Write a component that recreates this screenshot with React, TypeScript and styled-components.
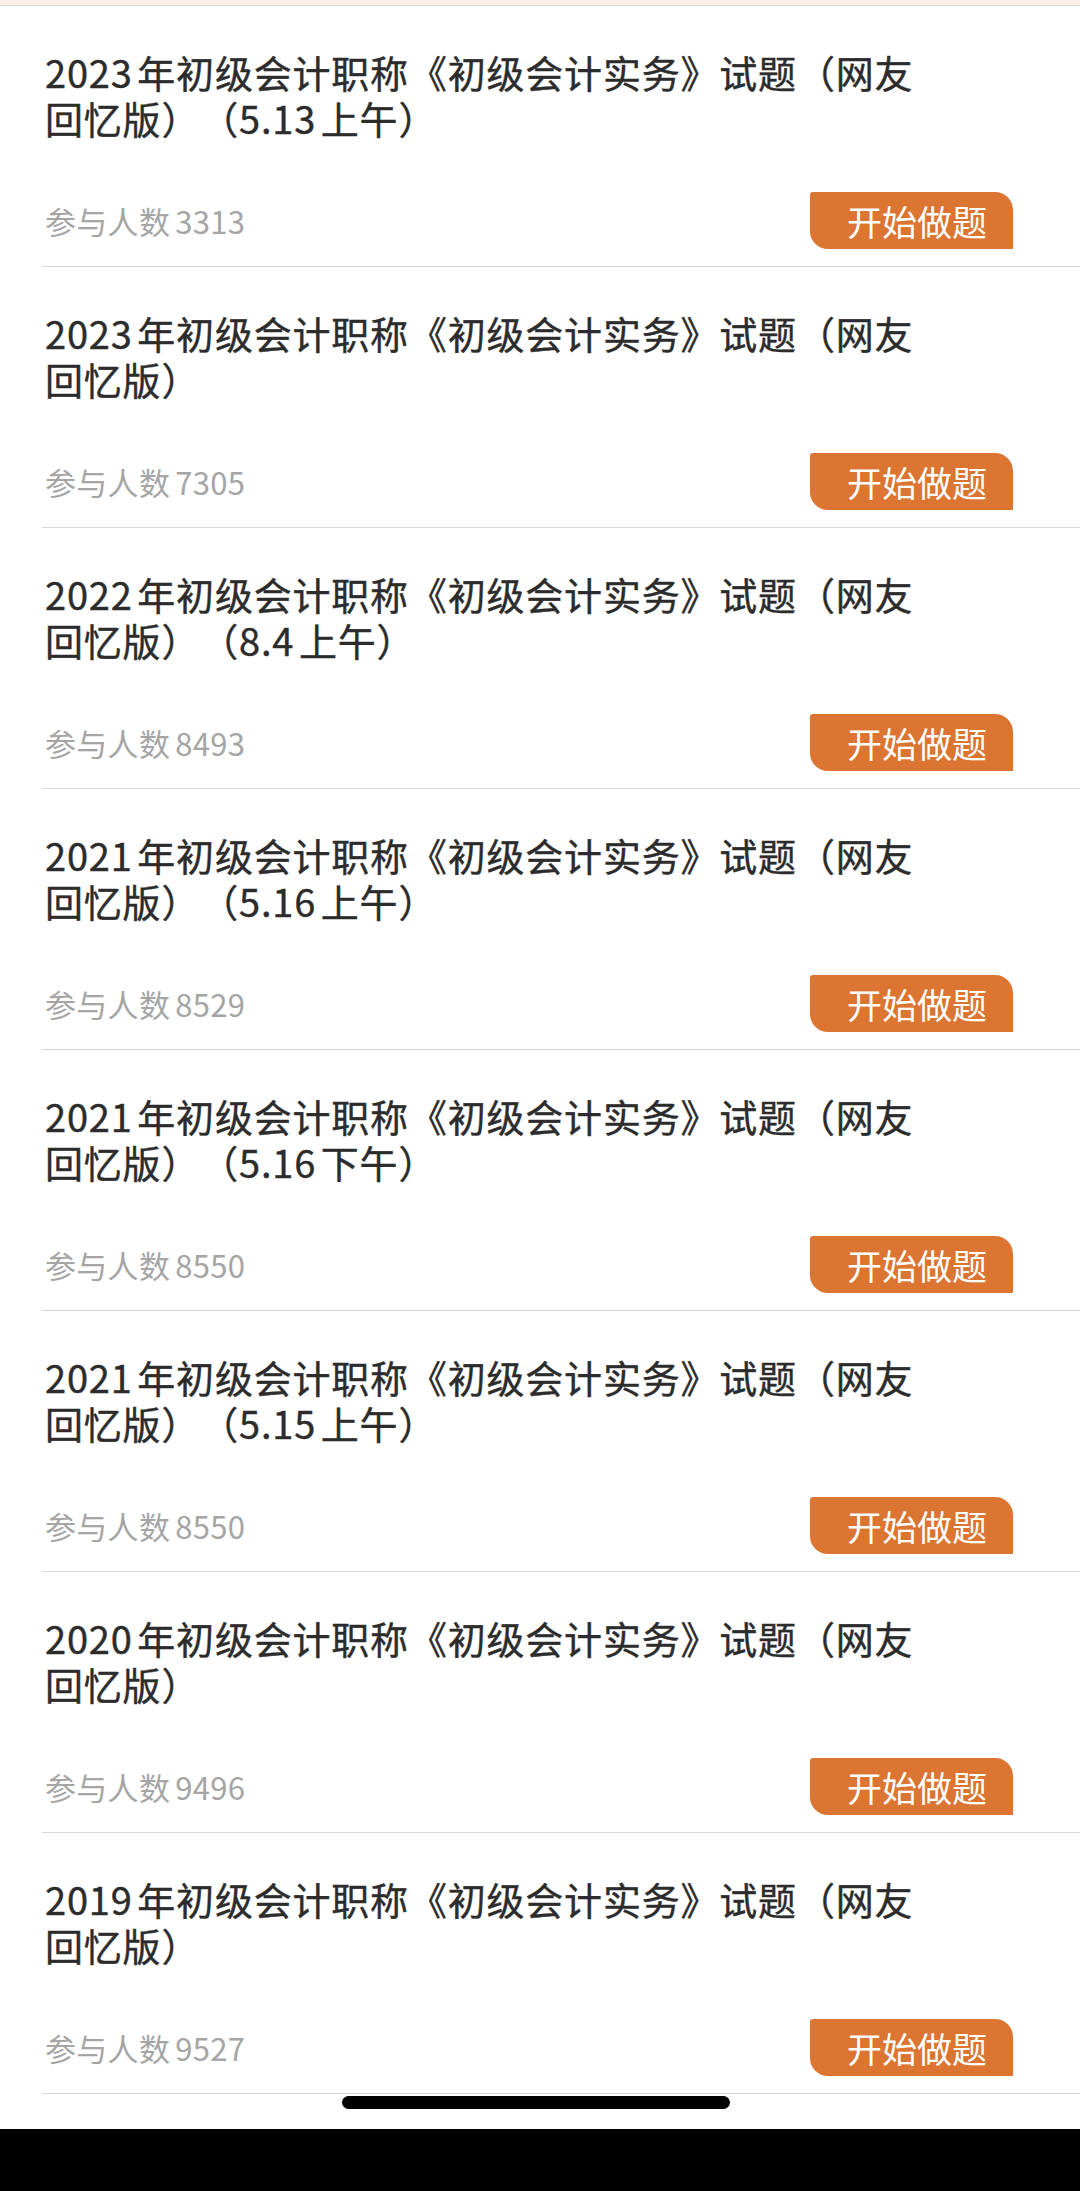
import styled, { createGlobalStyle } from "styled-components"

const GlobalStyle = createGlobalStyle`
    * { box-sizing: border-box; }
    html, body {
        margin: 0;
        padding: 0;
        background-color: #FFFFFF;
        font-family: "Noto Sans CJK SC", "Noto Sans", sans-serif;
    }
`

const exams = [
    { year: "2023", suffix: "（5.13上午）", count: 3313 },
    { year: "2023", suffix: "", count: 7305 },
    { year: "2022", suffix: "（8.4上午）", count: 8493 },
    { year: "2021", suffix: "（5.16上午）", count: 8529 },
    { year: "2021", suffix: "（5.16下午）", count: 8550 },
    { year: "2021", suffix: "（5.15上午）", count: 8550 },
    { year: "2020", suffix: "", count: 9496 },
    { year: "2019", suffix: "", count: 9527 },
]

function App() {
    return (
        <Page>
            <GlobalStyle />
            <TopStrip />

            <List>
                {exams.map((exam, i) => (
                    <Item key={i}>
                        <Title>
                            {exam.year}年初级会计职称《初级会计实务》试题（网友回忆版）{exam.suffix}
                        </Title>
                        <Footer>
                            <Count>
                                参与人数<Number>{exam.count}</Number>
                            </Count>
                            <StartButton>开始做题</StartButton>
                        </Footer>
                    </Item>
                ))}
            </List>

            <BottomArea>
                <HomeIndicator />
            </BottomArea>
            <BlackBar />
        </Page>
    );
}

const Page = styled.div`
    width: 1080px;
    display: flex;
    flex-direction: column;
    background-color: #FFFFFF;
`

const TopStrip = styled.div`
    height: 6px;
    background-color: #FCEFE5;
    box-shadow: inset 0 -1px 0 #DCD6D2;
`

const List = styled.div`
    display: flex;
    flex-direction: column;
`

const Item = styled.div`
    height: 261px;
    margin-left: 42px;
    padding: 43px 67px 17px 3px;
    border-bottom: 1px solid #D6D6D6;

    display: flex;
    flex-direction: column;
    justify-content: space-between;
`

const Title = styled.div`
    max-width: 885px;
    font-size: 38px;
    line-height: 46px;
    font-weight: 400;
    color: #2C2C2C;
    -webkit-text-stroke: 0.4px #2C2C2C;
    letter-spacing: 0.8px;
    text-spacing-trim: space-all;
    text-autospace: normal;
`

const Footer = styled.div`
    display: flex;
    align-items: center;
    justify-content: space-between;
`

const Count = styled.div`
    font-size: 31px;
    letter-spacing: 0.3px;
    color: #A5A5A5;
`

const Number = styled.span`
    margin-left: 5px;
`

const StartButton = styled.button`
    width: 203px;
    height: 57px;
    padding: 0 0 0 37px;
    border: none;
    border-radius: 3px 18px 0 18px;
    background-color: #DB7531;

    font-family: inherit;
    font-size: 35px;
    color: #FFFFFF;
    text-align: left;
    line-height: 57px;
`

const BottomArea = styled.div`
    height: 35px;
    padding: 2px 0 0 342px;
    display: flex;
`

const HomeIndicator = styled.div`
    width: 388px;
    height: 13px;
    border-radius: 7px;
    background-color: #000000;
`

const BlackBar = styled.div`
    height: 62px;
    background-color: #000000;
`

export default App;
